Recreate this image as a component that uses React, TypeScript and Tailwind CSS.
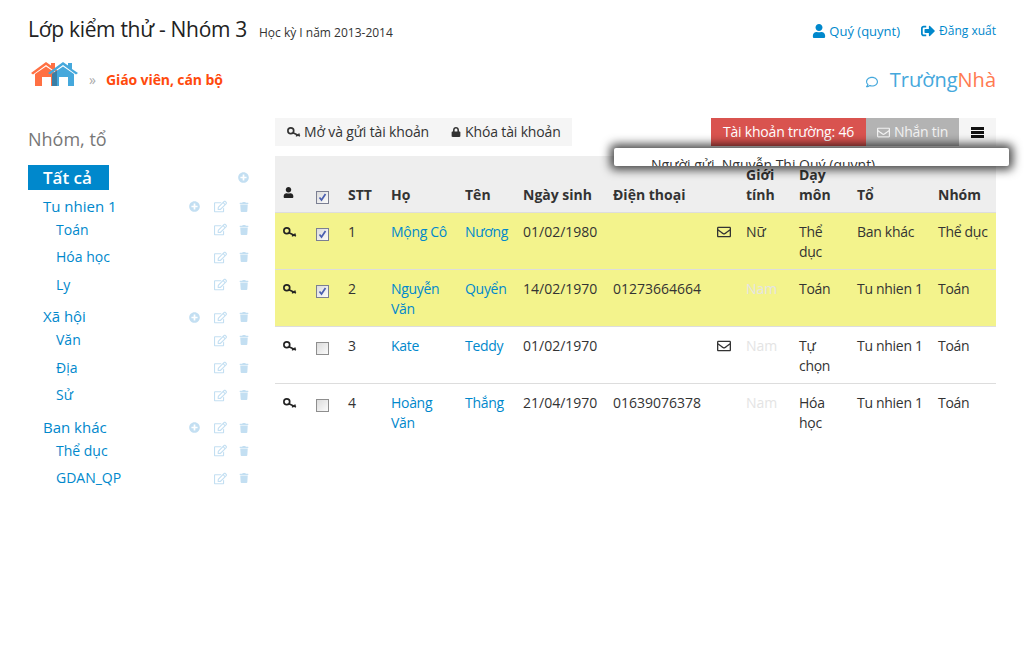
import React from 'react';
import { FaUser, FaPlusCircle, FaRegEdit, FaTrash, FaLock, FaRegEnvelope, FaRegComment, FaSignOutAlt } from 'react-icons/fa';

interface Person {
  no: number;
  ho: string;
  ten: string;
  dob: string;
  phone: string;
  mail: boolean;
  gender: string;
  subject: string;
  team: string;
  group: string;
  checked: boolean;
}

const people: Person[] = [
  { no: 1, ho: 'Mộng Cô', ten: 'Nương', dob: '01/02/1980', phone: '', mail: true, gender: 'Nữ', subject: 'Thể dục', team: 'Ban khác', group: 'Thể dục', checked: true },
  { no: 2, ho: 'Nguyễn Văn', ten: 'Quyển', dob: '14/02/1970', phone: '01273664664', mail: false, gender: 'Nam', subject: 'Toán', team: 'Tu nhien 1', group: 'Toán', checked: true },
  { no: 3, ho: 'Kate', ten: 'Teddy', dob: '01/02/1970', phone: '', mail: true, gender: 'Nam', subject: 'Tự chọn', team: 'Tu nhien 1', group: 'Toán', checked: false },
  { no: 4, ho: 'Hoàng Văn', ten: 'Thắng', dob: '21/04/1970', phone: '01639076378', mail: false, gender: 'Nam', subject: 'Hóa học', team: 'Tu nhien 1', group: 'Toán', checked: false },
];

const groups = [
  { name: 'Tu nhien 1', subs: ['Toán', 'Hóa học', 'Ly'] },
  { name: 'Xã hội', subs: ['Văn', 'Địa', 'Sử'] },
  { name: 'Ban khác', subs: ['Thể dục', 'GDAN_QP'] },
];

const KeyIcon = ({ className = '' }: { className?: string }) => (
  <svg width="14" height="11" viewBox="0 0 14 11" className={className}>
    <circle cx="3.8" cy="3.8" r="2.9" fill="none" stroke="currentColor" strokeWidth="1.7" />
    <path d="M5.8 5.8 L13 9 M9.6 7.4 L9.6 9.6 M12 8.4 L12 6.6" fill="none" stroke="currentColor" strokeWidth="1.5" />
  </svg>
);

const Houses = () => (
  <svg width="48" height="26" viewBox="0 0 48 26">
    <path d="M0 12 L15 1 L20 4.5 L20 2 L24 2 L24 8 L30 12 L28 13.5 L15 4 L2 13.5 Z" fill="#ff7043" />
    <path d="M4 13 L15 5.5 L26 13 L26 25 L20 25 L20 16 L11 16 L11 25 L4 25 Z" fill="#ff7043" />
    <path d="M17 12 L32 1 L37 4.5 L37 2 L41 2 L41 8 L47 12 L45 13.5 L32 4 L19 13.5 Z" fill="#45a8dc" />
    <path d="M21 13 L32 5.5 L43 13 L43 25 L37 25 L37 16 L28 16 L28 25 L21 25 Z" fill="#45a8dc" />
    <path d="M21 13 L26 9.6 L26 25 L21 25 Z" fill="#3a7ea6" />
  </svg>
);

const MenuIcon = () => (
  <svg width="13" height="11" viewBox="0 0 13 11">
    <path d="M0 0 H13 V3 H0 Z M0 4 H13 V7 H0 Z M0 8 H13 V11 H0 Z" fill="#111" />
  </svg>
);

const Check = ({ on }: { on: boolean }) => (
  <span className={`flex w-[13px] h-[13px] border ${on ? 'border-[#7b7f92]' : 'border-[#8e8e8e]'} bg-gradient-to-br from-[#dcdcdc] to-[#fbfbfb] items-center justify-center`}>
    {on && (
      <svg width="9" height="9" viewBox="0 0 9 9">
        <path d="M1.5 4.5 L3.5 7 L7.5 1" fill="none" stroke="#4a5fb0" strokeWidth="1.7" />
      </svg>
    )}
  </span>
);

const RowIcons = ({ plus }: { plus?: boolean }) => (
  <span className="flex items-center text-[#c3dff2]">
    {plus && <FaPlusCircle size={11} className="mr-[14px]" />}
    <FaRegEdit size={13} className="mr-[12px]" />
    <FaTrash size={10} />
  </span>
);

const th = 'px-2 pt-[9px] pb-[7px] text-left align-bottom font-bold leading-5';
const td = 'px-2 pt-[9px] pb-[7px] align-top leading-5';
const tight = 'tracking-[-0.3px]';

export default function App() {
  return (
    <div className="w-[1024px] h-[655px] overflow-hidden bg-white text-[#333] text-sm font-['Open_Sans',sans-serif]">
      <header className="flex justify-between pl-7 pr-7 pt-[15px]">
        <div>
          <div className="flex items-baseline">
            <h1 className="text-[21px] leading-[28px] tracking-[-0.3px] text-[#222]">Lớp kiểm thử - Nhóm 3</h1>
            <span className="ml-3 text-xs text-[#333]">Học kỳ I năm 2013-2014</span>
          </div>
          <div className="flex items-start mt-[18px] ml-[3px]">
            <Houses />
            <span className="ml-[10px] mt-[9px] text-[#aaa] text-sm">»</span>
            <span className="ml-[10px] mt-[9px] text-sm tracking-[-0.1px] font-bold text-[#ff4a0d]">Giáo viên, cán bộ</span>
          </div>
        </div>
        <div className="flex flex-col items-end pt-[2px]">
          <div className="flex items-center h-7 text-[#0088cc]">
            <FaUser size={14} className="mr-[3px]" />
            <span className="text-[13px]">Quý (quynt)</span>
            <FaSignOutAlt size={14} className="ml-[21px] mr-[4px]" />
            <span className="text-xs">Đăng xuất</span>
          </div>
          <div className="flex items-center mt-[21px] text-[20px] leading-7">
            <FaRegComment size={12} className="text-[#45a8dc] mr-3 mt-1" />
            <span className="text-[#45a8dc]">Trường</span>
            <span className="text-[#ff7a50]">Nhà</span>
          </div>
        </div>
      </header>

      <div className="flex mt-[24px]">
        <aside className="w-[247px] ml-7 shrink-0">
          <h2 className="text-lg text-[#777] leading-7 mt-[7px]">Nhóm, tổ</h2>
          <div className="flex items-center justify-between mt-[12px]">
            <span className="w-[81px] h-[25px] bg-[#0088cc] text-white text-[17px] font-semibold pl-[15px] leading-[25px]">Tất cả</span>
            <FaPlusCircle size={11} className="text-[#c3dff2] mr-[26px]" />
          </div>
          <ul className="mt-[5px] pr-[26px]">
            {groups.map((g) => (
              <li key={g.name} className="mb-[7px]">
                <div className="flex items-center justify-between pl-[15px] pt-[2px] h-[21px] text-[15px] text-[#0088cc]">
                  <span>{g.name}</span>
                  <RowIcons plus />
                </div>
                {g.subs.map((s) => (
                  <div key={s} className="flex items-center justify-between pl-7 h-[27.5px] text-[#0088cc]">
                    <span>{s}</span>
                    <RowIcons />
                  </div>
                ))}
              </li>
            ))}
          </ul>
        </aside>

        <main className="w-[721px] relative">
          <div className="flex justify-between">
            <div className="flex items-center h-7 bg-[#f5f5f5] w-[297px] pl-3 text-[#333] text-sm tracking-[-0.15px]">
              <KeyIcon className="mr-[3px]" />
              <span>Mở và gửi tài khoản</span>
              <FaLock size={10} className="ml-[22px] mr-[4px]" />
              <span>Khóa tài khoản</span>
            </div>
            <div className="flex h-7">
              <span className="w-[155px] bg-[#d9534f] text-white flex items-center justify-center tracking-[-0.2px]">Tài khoản trường: 46</span>
              <span className="w-[93px] bg-[#b3b3b3] text-[#f2f2f2] flex items-center justify-center tracking-[-0.3px]">
                <FaRegEnvelope size={13} className="mr-1" />
                Nhắn tin
              </span>
              <span className="w-[37px] bg-[#f5f5f5] flex items-center justify-center">
                <MenuIcon />
              </span>
            </div>
          </div>

          <div className="absolute z-10 left-[339px] top-[30px] w-[395px] h-[18px] overflow-hidden bg-white rounded-[2px] shadow-[0_0_10px_4px_rgba(0,0,0,0.7)] pl-[37px] pt-[7px] text-sm leading-5 text-[#333] whitespace-nowrap">
            Người gửi&nbsp; Nguyễn Thị Quý (quynt)
          </div>

          <table className="mt-[10px] w-[721px] table-fixed border-collapse">
            <colgroup>
              <col className="w-[33px]" />
              <col className="w-[32px]" />
              <col className="w-[43px]" />
              <col className="w-[74px]" />
              <col className="w-[58px]" />
              <col className="w-[90px]" />
              <col className="w-[104px]" />
              <col className="w-[29px]" />
              <col className="w-[53px]" />
              <col className="w-[58px]" />
              <col className="w-[81px]" />
              <col className="w-[66px]" />
            </colgroup>
            <thead>
              <tr className="bg-[#eeeeee] border-b border-[#dddddd]">
                <th className={th}><FaUser size={11} className="mb-[7px] text-[#222]" /></th>
                <th className={th}><span className="block mb-[1px]"><Check on /></span></th>
                <th className={th}>STT</th>
                <th className={th}>Họ</th>
                <th className={th}>Tên</th>
                <th className={th}>Ngày sinh</th>
                <th className={th}>Điện thoại</th>
                <th className={th}></th>
                <th className={th}>Giới tính</th>
                <th className={th}>Dạy môn</th>
                <th className={th}>Tổ</th>
                <th className={th}>Nhóm</th>
              </tr>
            </thead>
            <tbody>
              {people.map((p, i) => (
                <tr key={p.no} className={`${i < people.length - 1 ? 'border-b border-[#dddddd]' : ''} ${p.checked ? 'bg-[#f3f38c]' : ''}`}>
                  <td className={td}><KeyIcon className="mt-[5px] text-[#222]" /></td>
                  <td className={td}><span className="block mt-[6px]"><Check on={p.checked} /></span></td>
                  <td className={td}>{p.no}</td>
                  <td className={`${td} ${tight} text-[#0088cc]`}>{p.ho}</td>
                  <td className={`${td} ${tight} text-[#0088cc]`}>{p.ten}</td>
                  <td className={td}>{p.dob}</td>
                  <td className={td}>{p.phone}</td>
                  <td className={td}>{p.mail && <FaRegEnvelope size={14} className="mt-[3px]" />}</td>
                  <td className={`${td} ${p.gender === 'Nam' ? 'text-[#e4e4e4]' : ''}`}>{p.gender}</td>
                  <td className={`${td} ${tight}`}>{p.subject}</td>
                  <td className={`${td} ${tight} whitespace-nowrap`}>{p.team}</td>
                  <td className={`${td} ${tight}`}>{p.group}</td>
                </tr>
              ))}
            </tbody>
          </table>
        </main>
      </div>
    </div>
  );
}
